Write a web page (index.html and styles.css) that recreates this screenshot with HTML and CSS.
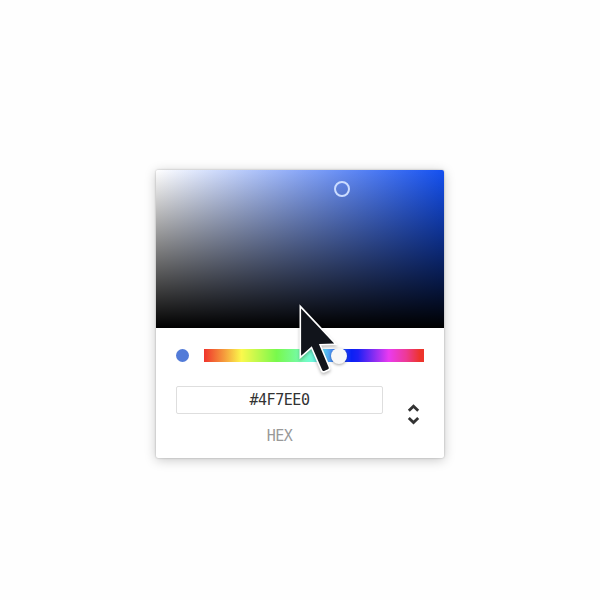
FILE: index.html
```html
<!DOCTYPE html>
<html lang="en">
<head>
<meta charset="utf-8">
<title>Color picker</title>
<link rel="stylesheet" href="styles.css">
</head>
<body>
<main class="picker">
  <div class="saturation"><span class="ring"></span></div>
  <div class="controls">
    <div class="hue-row">
      <span class="swatch"></span>
      <div class="hue"><span class="thumb"></span></div>
    </div>
    <div class="value-row">
      <div class="field">
        <div class="value">#4F7EE0</div>
        <div class="label">HEX</div>
      </div>
      <svg class="toggle" width="14" height="24" viewBox="0 0 14 24">
        <path d="M2.8 8.8 7.5 4.2l4.7 4.6M2.8 15.9 7.5 20.5l4.7-4.6"/>
      </svg>
    </div>
  </div>
  <svg class="cursor" width="46" height="80" viewBox="0 0 46 80">
    <path d="M5.1 8.4 5.1 55.7 15.8 46.2 26.2 70.1Q26.8 71.4 28.1 70.9L32 69.3Q33.2 68.7 32.7 67.5L22.9 44 38.2 43.6Z"/>
  </svg>
</main>
</body>
</html>
```
FILE: styles.css
```css
* { box-sizing: border-box; }
body {
  margin: 0;
  height: 100vh;
  display: grid;
  place-items: center;
  background: #fefefe;
  font-family: "DejaVu Sans Mono", monospace;
}
.picker {
  position: relative;
  width: 288px;
  height: 288px;
  margin-top: 28px;
  background: #fff;
  border-radius: 2px;
  box-shadow: 0 0 2px rgba(0, 0, 0, .3), 0 2px 12px rgba(0, 0, 0, .22);
}
.saturation {
  position: relative;
  height: 158px;
  border-radius: 2px 2px 0 0;
  background: linear-gradient(to top, #000, transparent), linear-gradient(to right, #fff, #1450f0);
}
.ring {
  position: absolute;
  left: 178px;
  top: 11px;
  width: 16px;
  height: 16px;
  border: 2px solid #cbdcff;
  border-radius: 50%;
}
.controls { padding: 21px 20px 0; }
.hue-row { display: flex; align-items: center; gap: 15px; height: 13px; }
.swatch { width: 13px; height: 13px; border-radius: 50%; background: #527bd8; }
.hue {
  position: relative;
  flex: 1;
  height: 13px;
  background: linear-gradient(to right, #f0342c 0%, #f59a3c 9%, #fbf94c 17%, #78f94c 33%, #74fbd0 48%, #62e8f0 53%, #4a90f5 58%, #0a20f5 67%, #1d20f5 70%, #ea3af0 84%, #ed3a94 92%, #ed342c 98%);
}
.thumb {
  position: absolute;
  left: 127px;
  top: -1px;
  width: 16px;
  height: 16px;
  border-radius: 50%;
  background: #f8f8f8;
  box-shadow: 0 1px 3px rgba(0, 0, 0, .35);
}
.value-row { display: flex; justify-content: space-between; padding: 24px 4px 0 0; }
.field { width: 207px; text-align: center; }
.value {
  height: 28px;
  border: 1.5px solid #dedede;
  border-radius: 2px;
  font-size: 15px;
  letter-spacing: -.45px;
  line-height: 27px;
  color: #333;
}
.label { margin-top: 13px; font-size: 15px; letter-spacing: -.45px; line-height: 19px; color: #999; }
.toggle { margin-top: 16px; fill: none; stroke: #333; stroke-width: 2.8; }
.cursor {
  position: absolute;
  left: 140px;
  top: 130px;
  fill: #11141b;
  stroke: #fff;
  stroke-width: 3.2;
  paint-order: stroke;
  filter: drop-shadow(0 2px 1.5px rgba(0, 0, 0, .25));
}
```
